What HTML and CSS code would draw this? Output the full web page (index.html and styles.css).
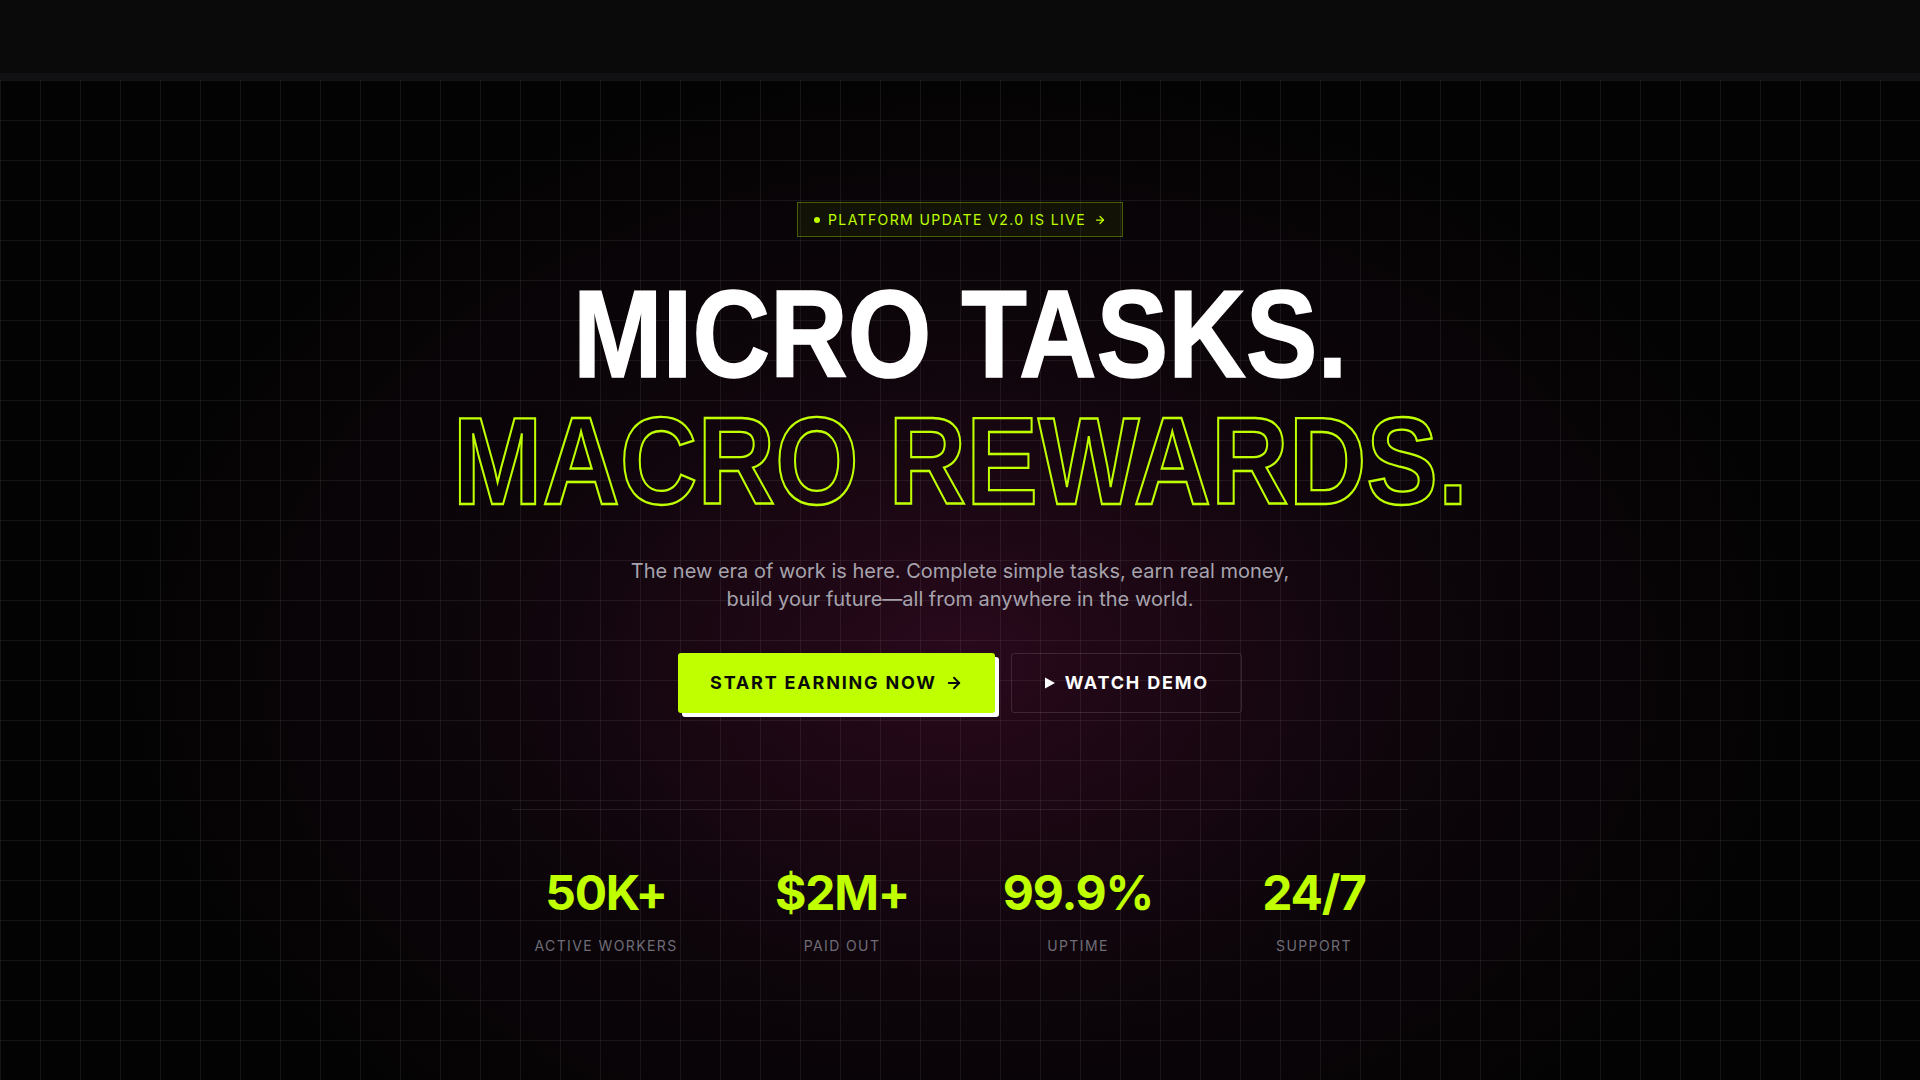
FILE: index.html
```html
<!DOCTYPE html>
<html lang="en">
<head>
<meta charset="utf-8">
<title>Micro Tasks. Macro Rewards.</title>
<link rel="stylesheet" href="styles.css">
</head>
<body>
<header class="topbar"></header>
<div class="topbar-edge"></div>
<main class="hero">
  <div class="hero-inner">
    <a class="badge" href="#">
      <span class="badge-dot"></span>
      <span class="badge-text">PLATFORM UPDATE V2.0 IS LIVE</span>
      <svg class="badge-arrow" viewBox="0 0 24 24" width="12" height="12" fill="none" stroke="currentColor" stroke-width="2.5" stroke-linecap="round" stroke-linejoin="round"><path d="M5 12h14"/><path d="m12 5 7 7-7 7"/></svg>
    </a>
    <h1 class="title">
      <span class="title-solid">MICRO TASKS.</span>
      <span class="title-outline">MACRO REWARDS.</span>
    </h1>
    <p class="lead">The new era of work is here. Complete simple tasks, earn real money, build your future—all from anywhere in the world.</p>
    <div class="actions">
      <a class="btn btn-primary" href="#">START EARNING NOW
        <svg class="btn-arrow" viewBox="0 0 24 24" width="18" height="18" fill="none" stroke="currentColor" stroke-width="2.5" stroke-linecap="round" stroke-linejoin="round"><path d="M5 12h14"/><path d="m12 5 7 7-7 7"/></svg>
      </a>
      <a class="btn btn-ghost" href="#">
        <svg class="play" viewBox="0 0 14 14" width="14" height="14"><polygon points="2,1.5 12,7 2,12.5" fill="currentColor"/></svg>
        WATCH DEMO
      </a>
    </div>
    <div class="stats">
      <div class="stat"><div class="stat-value">50K+</div><div class="stat-label">ACTIVE WORKERS</div></div>
      <div class="stat"><div class="stat-value">$2M+</div><div class="stat-label">PAID OUT</div></div>
      <div class="stat"><div class="stat-value">99.9%</div><div class="stat-label">UPTIME</div></div>
      <div class="stat"><div class="stat-value">24/7</div><div class="stat-label">SUPPORT</div></div>
    </div>
  </div>
</main>
</body>
</html>
```
FILE: styles.css
```css
* { box-sizing: border-box; }
html, body { margin: 0; padding: 0; }
body {
  background: #030303;
  font-family: Inter, "Noto Sans", sans-serif;
  color: #fff;
  overflow: hidden;
}
a { text-decoration: none; color: inherit; }

.topbar {
  height: 73px;
  background: #0a0a0a;
}
.topbar-edge {
  height: 7px;
  background: #111113;
}

.hero {
  min-height: 1000px;
  background-color: #030303;
  background-image:
    linear-gradient(to right, rgba(255,255,255,0.065) 1px, transparent 1px),
    linear-gradient(to bottom, rgba(255,255,255,0.065) 1px, transparent 1px),
    radial-gradient(ellipse 880px 620px at 50% 58%, rgba(72,14,48,0.55), rgba(40,10,30,0.25) 55%, transparent 100%);
  background-size: 40px 40px, 40px 40px, 100% 100%;
  background-position: 0 0, 0 0, 0 0;
}
.hero-inner {
  display: flex;
  flex-direction: column;
  align-items: center;
  padding-top: 122px;
}

.badge {
  display: flex;
  align-items: center;
  gap: 8px;
  padding: 7px 16px;
  border: 1px solid rgba(191,255,0,0.32);
  background: rgba(191,255,0,0.06);
  color: #bfff00;
  font-size: 14px;
  line-height: 19px;
  font-weight: 400;
  letter-spacing: 0.1em;
}
.badge-dot {
  width: 6px;
  height: 6px;
  border-radius: 50%;
  background: #bfff00;
}
.badge-arrow { display: block; }

.title {
  margin: 33px 0 0;
  display: flex;
  flex-direction: column;
  align-items: center;
  font-family: "Liberation Sans", Arial, sans-serif;
  font-weight: 700;
  font-size: 125px;
  line-height: 127px;
  letter-spacing: 0;
  white-space: nowrap;
}
.title-solid,
.title-outline {
  display: block;
  transform: scaleX(0.86);
}
.title-solid {
  color: #fff;
  -webkit-text-stroke: 1.5px #fff;
}
.title-outline {
  color: transparent;
  -webkit-text-stroke: 2.3px #bfff00;
}

.lead {
  margin: 33px 0 0;
  max-width: 672px;
  text-align: center;
  font-size: 20px;
  line-height: 28px;
  color: #a6a3ad;
}

.actions {
  display: flex;
  gap: 16px;
  margin-top: 40px;
}
.btn {
  display: flex;
  align-items: center;
  gap: 8px;
  height: 60px;
  padding: 0 32px;
  font-size: 18px;
  line-height: 28px;
  font-weight: 700;
  letter-spacing: 0.1em;
  border-radius: 3px;
}
.btn-primary {
  background: #bfff00;
  color: #0a0a0a;
  box-shadow: 4px 4px 0 #ffffff;
}
.btn-ghost {
  color: #fff;
  border: 1px solid rgba(255,255,255,0.12);
  padding: 0 32px 0 31px;
}
.btn svg { display: block; flex: none; }

.stats {
  margin-top: 96px;
  width: 896px;
  border-top: 1px solid rgba(255,255,255,0.09);
  padding-top: 59px;
  display: grid;
  grid-template-columns: repeat(4, 1fr);
  gap: 48px;
}
.stat {
  display: flex;
  flex-direction: column;
  align-items: center;
}
.stat-value {
  font-size: 48px;
  line-height: 48px;
  font-weight: 700;
  letter-spacing: -0.025em;
  color: #bfff00;
}
.stat-label {
  margin-top: 19px;
  font-size: 14px;
  line-height: 20px;
  letter-spacing: 0.1em;
  color: #6f6d78;
}
```
